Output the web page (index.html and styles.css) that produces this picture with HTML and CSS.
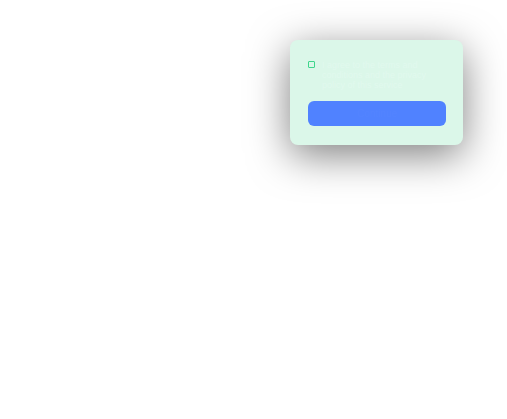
FILE: index.html
```html
<!DOCTYPE html>
<html>
<head>
<meta charset="utf-8">
<link rel="stylesheet" href="styles.css">
</head>
<body>
<div class="card">
  <label class="row">
    <span class="box"></span>
    <span class="text">I agree to the terms and conditions and the privacy policy of this service</span>
  </label>
  <button class="btn">Continue</button>
</div>
</body>
</html>
```
FILE: styles.css
```css
html, body { margin: 0; padding: 0; background: #fff; }
body { font-family: "Liberation Sans", Arial, sans-serif; width: 507px; height: 419px; position: relative; }
.card {
  position: absolute;
  left: 290px; top: 40px;
  width: 173px; height: 105px;
  box-sizing: border-box;
  padding: 21px 17px 19px 18px;
  background: #dbf7e9;
  border-radius: 8px;
  box-shadow: 0 10px 40px rgba(0,0,0,0.5);
  display: flex; flex-direction: column;
}
.row { display: flex; align-items: flex-start; gap: 7px; height: 40px; }
.box {
  flex: none;
  width: 7px; height: 7px;
  border: 1px solid #3fd68c;
  border-radius: 1px;
  box-sizing: border-box;
}
.text { font-size: 9px; line-height: 10px; color: #e1f9ee; margin-top: -1px; }
.btn {
  height: 25px; width: 138px;
  border: none; border-radius: 6px;
  background: #5082ff;
  color: #5384ff;
  font-size: 10px;
  font-family: inherit;
  padding: 0;
}
```
